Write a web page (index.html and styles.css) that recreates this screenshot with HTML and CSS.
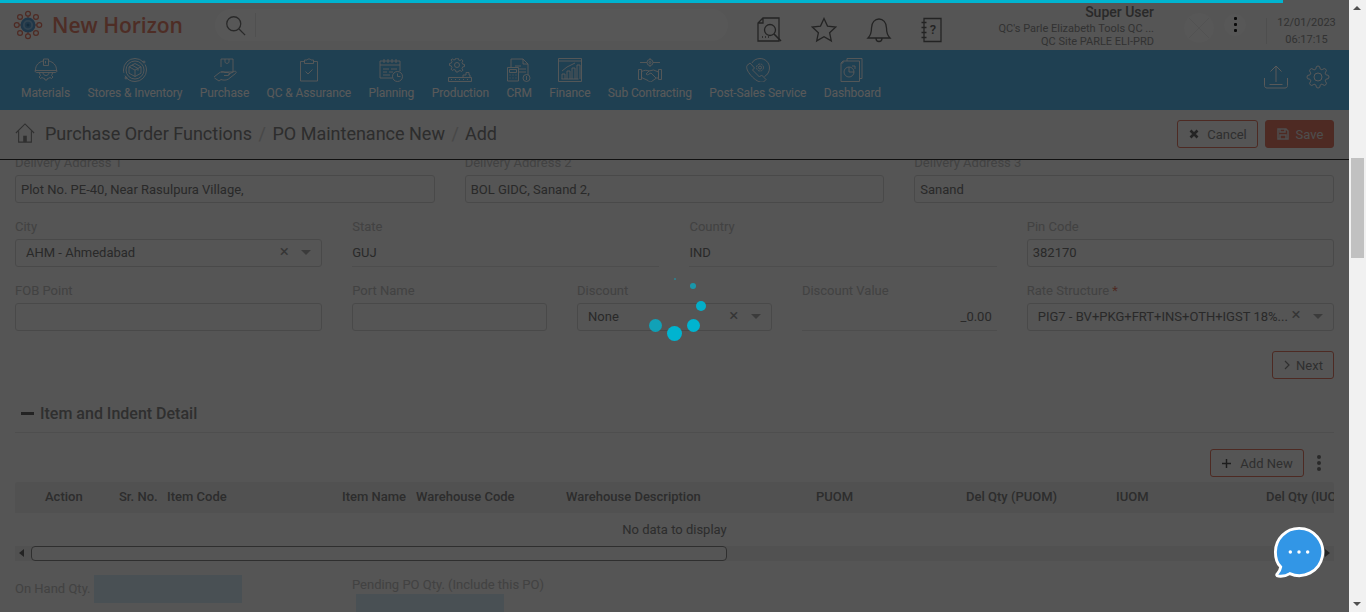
FILE: index.html
```html
<!DOCTYPE html>
<html lang="en">
<head>
<meta charset="utf-8">
<title>PO Maintenance New</title>
<link rel="stylesheet" href="styles.css">
</head>
<body>
<div class="app">
  <div class="main">
    <header class="topbar">
      <div class="brand">
        <svg class="logo" viewBox="0 0 32 32"><g fill="none" stroke="#e07a66" stroke-width="1.300"><circle cx="16" cy="4" r="2.600"/><circle cx="16" cy="28" r="2.600"/><circle cx="4" cy="16" r="2.600"/><circle cx="28" cy="16" r="2.600"/><circle cx="7.500" cy="7.500" r="2.600"/><circle cx="24.500" cy="7.500" r="2.600"/><circle cx="7.500" cy="24.500" r="2.600"/><circle cx="24.500" cy="24.500" r="2.600"/><path d="M6.600 16h2.600M23 16h2.600M16 6.600v2.600M16 23v2.600"/></g><circle cx="16" cy="16" r="8" fill="#5b9fd0"/><circle cx="16" cy="16" r="4.400" fill="none" stroke="#8cc0e4" stroke-width="2"/><circle cx="16" cy="16" r="1.600" fill="#3c7fae"/></svg>
        <span class="brand-name">New Horizon</span>
      </div>
      <div class="search">
        <svg class="search-ic" viewBox="0 0 24 24"><circle cx="10" cy="10" r="8"/><path d="M16 16l7 7"/></svg>
        <span class="search-div"></span>
      </div>
      <div class="tools">
        <svg class="tool" viewBox="0 0 26 26"><path d="M7 1h16v23H2V6zM7 1v5H2"/><circle cx="14" cy="13" r="5.500"/><path d="M18 17l7 7M6 20h1M9 20h1M12 20h1" stroke-width="1.600"/></svg>
        <svg class="tool" viewBox="0 0 26 26"><path d="M13 1.500l3.500 7.600 8.200 1-6.100 5.600 1.700 8.200-7.300-4.100-7.300 4.100 1.700-8.200-6.100-5.600 8.200-1z"/></svg>
        <svg class="tool" viewBox="0 0 26 26"><path d="M2 21c3-3 3.500-6 3.500-10C5.500 5.500 9 2 13 2s7.500 3.500 7.500 9c0 4 .5 7 3.500 10zM10 21.500c0 4 6 4 6 0"/></svg>
        <svg class="tool tool-note" viewBox="2 0 21 26"><path d="M5 1.500h17v23H5zM2.500 5.500h5M2.500 10.500h5M2.500 15.500h5M2.500 20.500h5"/><text x="14" y="17" class="tool-q">?</text></svg>
      </div>
      <div class="user">
        <div class="user-name">Super User</div>
        <div class="user-line">QC's Parle Elizabeth Tools QC ...</div>
        <div class="user-line">QC Site PARLE ELI-PRD</div>
      </div>
      <div class="avatar"><svg viewBox="0 0 30 30"><path d="M5 5l20 20M25 5L5 25"/></svg></div>
      <div class="more"><i></i><i></i><i></i></div>
      <div class="clock"><div>12/01/2023</div><div>06:17:15</div></div>
    </header>

    <nav class="nav">
      <a class="nav-item"><svg viewBox="0 0 24 24"><path d="M1.500 12C1.500 7 5 4 9 3M22.500 12c0-5-3.500-8-7.500-9M9.500 7.500V1h5v6.500zM11.500 3v2.500M1 12.500h22M1 12.500c0 1.500 1 2 2 2h18c1 0 2-.5 2-2M5.500 14.500c0 1 .3 2 1 3l-1.500 1.500 1.500 1.500 1.500-1c.7.5 1.500 1 2.500 1l.5 1.500h2l.5-1.500c1 0 1.800-.5 2.500-1l1.500 1 1.500-1.500-1.500-1.500c.7-1 1-2 1-3M9 14.500c0 4 6 4 6 0"/></svg><span>Materials</span></a>
      <a class="nav-item"><svg viewBox="0 0 24 24"><circle cx="12" cy="12" r="11.500" stroke-dasharray="30 3 30 3"/><circle cx="12" cy="12" r="9"/><path d="M12 5.500l6 3.300v6.400l-6 3.300-6-3.300V8.800zM6 8.800l6 3.300 6-3.300M12 12.100v6.600M9 7.100l6 3.400v2.200"/><circle cx="21" cy="4" r="1" /><circle cx="3" cy="20" r="1"/></svg><span>Stores &amp; Inventory</span></a>
      <a class="nav-item"><svg viewBox="0 0 24 24"><path d="M8 1h12v13H8M8 1v8M12 1v2.500c0 2.500 4 2.500 4 0V1M1 19l5-4c2-1.500 4-1.500 6-.5h3c2 0 2 3 0 3h-4M15 16.500l6-3c2-1 3 1 1.500 2l-7 5.500c-2 1.300-5 1.500-7.500.5l-2 1.500L1.500 20"/></svg><span>Purchase</span></a>
      <a class="nav-item"><svg viewBox="0 0 24 24"><path d="M7.500 3.500H3.500V23h17V3.500h-4M7.500 2H10c.7-1.500 3.300-1.500 4 0h2.500v3.500h-9zM8.500 13.500l2.500 2.500 4.500-4.500"/></svg><span>QC &amp; Assurance</span></a>
      <a class="nav-item"><svg viewBox="0 0 24 24"><path d="M13 20H1V3h20v10M1 7h20M5 1v4M9 1v4M13 1v4M17 1v4M4 11h6M12 11h6M4 14h4M10 14h4M4 17h7"/><circle cx="18.500" cy="18.500" r="5"/><path d="M18.500 15.500v3h3"/></svg><span>Planning</span></a>
      <a class="nav-item"><svg viewBox="0 0 24 24"><circle cx="9" cy="7" r="2.500"/><path d="M8 0h2l.4 1.800 1.700.7 1.500-1 1.400 1.400-1 1.500.7 1.700 1.800.4v2l-1.800.4-.7 1.700 1 1.500-1.400 1.400-1.500-1-1.700.7L10 14H8l-.4-1.800-1.700-.7-1.500 1L3 11.100l1-1.500-.7-1.700L1.500 7.500v-2l1.800-.4.700-1.700-1-1.500L4.400 1l1.500 1 1.700-.7zM.5 19.500h23v4H.5zM15 19.500V17h3v-2.500h3V17h1v2.500M3 21.500h1M7 21.500h1M11 21.500h1M15 21.500h1M19 21.500h1"/></svg><span>Production</span></a>
      <a class="nav-item"><svg viewBox="0 0 24 24"><path d="M4 9V1h12l5 5v11M16 1v5h5M8 8h6M12 11h7M12 14h7M.5 9.500h11V23H.5zM2.500 11.500h7v3h-7zM2.500 17h1M5.500 17h1M8.500 17h1M2.500 20h1M5.500 20h1M8.500 20h1"/><circle cx="19.500" cy="20" r="3.500"/><path d="M19.500 18v4"/></svg><span>CRM</span></a>
      <a class="nav-item"><svg viewBox="0 0 24 24"><path d="M.5.500h23v23H.5zM.5 3h23M3.500 21h17M4 21v-5h3v5M9 21v-8h3v8M14 21v-11h3v11M19 21V7h3v14M4 13l5-4 4-2 4-2"/></svg><span>Finance</span></a>
      <a class="nav-item"><svg viewBox="0 0 24 24"><circle cx="12" cy="4.500" r="3"/><circle cx="12" cy="4.500" r="1"/><path d="M12 0v1.500M12 7.500V9M9 4.500H2M22 4.500h-7M.5 11.500h3v10h-3zM20.500 11.500h3v10h-3zM3.500 13.500c3-1.500 5-1.500 7.500-.5l4.500-1 5 2v6h-2l-5 3.500c-1.500 1-3 0-3.500-1l-6.500-3zM11 13l-3 3c1 1 2 1 3 0l2-1 5 5"/></svg><span>Sub Contracting</span></a>
      <a class="nav-item"><svg viewBox="0 0 24 24"><path d="M6 5C7 2.500 10.500.5 14 .5c5 0 9.500 4 9.500 9.500 0 3.500-2 7-5 8.500"/><circle cx="14" cy="9.500" r="1.500"/><circle cx="14" cy="9.500" r="3.500" stroke-dasharray="2 .8"/><path d="M1 7.500l3-2.500 4.500 5-2 2 7 7 2-2 4.500 4.500-2.500 2.500c-4 1-8.500-2-12.500-6.500C1.500 13.500 0 10 1 7.500z"/></svg><span>Post-Sales Service</span></a>
      <a class="nav-item"><svg viewBox="0 0 24 24"><path d="M19.500 20.500h2.500V.5H7V3M3 3h16.500v20.500H1V5zM3 3v2H1"/><circle cx="9" cy="14" r="5"/><path d="M9 9v5h5M12 8h3v3"/></svg><span>Dashboard</span></a>
      <span class="nav-end">
        <svg viewBox="0 0 24 24"><path d="M.5 13v7.500c0 1.500 1 2.500 2.500 2.500h18c1.500 0 2.500-1 2.500-2.500V13M12 17V1M6.500 6.500L12 1l5.500 5.500M5.500 19.500h13"/></svg>
        <svg viewBox="0 0 24 24"><circle cx="12" cy="12" r="4"/><path d="M19.400 15a1.650 1.650 0 0 0 .33 1.820l.06.06a2 2 0 0 1 0 2.830 2 2 0 0 1-2.830 0l-.06-.06a1.650 1.650 0 0 0-1.820-.33 1.650 1.650 0 0 0-1 1.510V21a2 2 0 0 1-2 2 2 2 0 0 1-2-2v-.09A1.650 1.650 0 0 0 9 19.400a1.650 1.650 0 0 0-1.820.33l-.06.06a2 2 0 0 1-2.830 0 2 2 0 0 1 0-2.830l.06-.06a1.650 1.650 0 0 0 .33-1.820 1.650 1.650 0 0 0-1.510-1H3a2 2 0 0 1-2-2 2 2 0 0 1 2-2h.09A1.650 1.650 0 0 0 4.600 9a1.650 1.650 0 0 0-.33-1.820l-.06-.06a2 2 0 0 1 0-2.830 2 2 0 0 1 2.830 0l.06.06a1.650 1.650 0 0 0 1.820.33H9a1.650 1.650 0 0 0 1-1.510V3a2 2 0 0 1 2-2 2 2 0 0 1 2 2v.09a1.650 1.650 0 0 0 1 1.510 1.650 1.650 0 0 0 1.820-.33l.06-.06a2 2 0 0 1 2.830 0 2 2 0 0 1 0 2.830l-.06.06a1.650 1.650 0 0 0-.33 1.820V9a1.650 1.650 0 0 0 1.510 1H21a2 2 0 0 1 2 2 2 2 0 0 1-2 2h-.09a1.650 1.650 0 0 0-1.510 1z"/></svg>
      </span>
    </nav>

    <div class="crumbs">
      <svg class="home" viewBox="0 0 22 22"><path d="M1 11L11 1l10 10M4 9v12h14V9"/><path class="home-door" d="M9 14h4v7H9z"/></svg>
      <span class="crumb">Purchase Order Functions</span><span class="sep">/</span>
      <span class="crumb">PO Maintenance New</span><span class="sep">/</span>
      <span class="crumb">Add</span>
      <span class="crumb-actions">
        <button class="btn btn-cancel"><svg viewBox="0 0 10 10"><path d="M1.500 1.500l7 7M8.500 1.500l-7 7"/></svg>Cancel</button>
        <button class="btn btn-save"><svg viewBox="0 0 12 12"><path d="M1 1h8l2 2v8H1zM3 1v3h5V1M3 11V7h6v4"/></svg>Save</button>
      </span>
    </div>

    <main class="content">
      <div class="form">
        <label class="field s4"><span class="lab">Delivery Address 1</span><span class="input tight">Plot No. PE-40, Near Rasulpura Village,</span></label>
        <label class="field s4"><span class="lab">Delivery Address 2</span><span class="input tight">BOL GIDC, Sanand 2,</span></label>
        <label class="field s4"><span class="lab">Delivery Address 3</span><span class="input tight">Sanand</span></label>

        <label class="field s3"><span class="lab">City</span><span class="input sel"><span class="val">AHM - Ahmedabad</span><b class="x">×</b><b class="caret"></b></span></label>
        <label class="field s3"><span class="lab">State</span><span class="input plain">GUJ</span></label>
        <label class="field s3"><span class="lab">Country</span><span class="input plain">IND</span></label>
        <label class="field s3"><span class="lab">Pin Code</span><span class="input tight raised">382170</span></label>

        <label class="field s3"><span class="lab">FOB Point</span><span class="input"></span></label>
        <label class="field s2"><span class="lab">Port Name</span><span class="input"></span></label>
        <label class="field s2"><span class="lab">Discount</span><span class="input sel"><span class="val">None</span><b class="x">×</b><b class="caret"></b></span></label>
        <label class="field s2"><span class="lab">Discount Value</span><span class="input plain right">_0.00</span></label>
        <label class="field s3"><span class="lab">Rate Structure <em>*</em></span><span class="input sel"><span class="val">PIG7 - BV+PKG+FRT+INS+OTH+IGST 18%...</span><b class="x x-high">×</b><b class="caret"></b></span></label>
      </div>

      <div class="next-row"><button class="btn btn-line btn-next"><svg viewBox="0 0 6 10"><path d="M1 1l4 4-4 4"/></svg>Next</button></div>

      <h2 class="section"><i class="minus"></i>Item and Indent Detail</h2>

      <div class="table-tools">
        <button class="btn btn-line btn-add"><svg viewBox="0 0 10 10"><path d="M5 0v10M0 5h10"/></svg>Add New</button>
        <span class="dots"><i></i><i></i><i></i></span>
      </div>

      <div class="grid">
        <div class="thead">
          <span class="c-action">Action</span><span class="c-sr">Sr. No.</span><span class="c-code">Item Code</span><span class="c-name">Item Name</span><span class="c-wh">Warehouse Code</span><span class="c-wd">Warehouse Description</span><span class="c-q">PUOM</span><span class="c-q">Del Qty (PUOM)</span><span class="c-q">IUOM</span><span class="c-q">Del Qty (IUOM)</span>
        </div>
        <div class="empty">No data to display</div>
        <div class="hscroll"><i class="arrow-l"></i><span class="hthumb"></span><i class="arrow-r"></i></div>
      </div>

      <div class="qty">
        <div class="qty-a"><span class="lab">On Hand Qty.</span><span class="box"></span></div>
        <div class="qty-b"><span class="lab">Pending PO Qty. (Include this PO)</span><span class="box"></span></div>
      </div>
    </main>

    <div class="overlay"></div>
    <div class="progress"></div>
    <div class="spinner"><i class="d1"></i><i class="d2"></i><i class="d3"></i><i class="d4"></i><i class="d5"></i><i class="d6"></i></div>
    <svg class="chat" viewBox="0 0 54 54"><path d="M27 2.500a24.500 24.500 0 1 1-9.500 47c-3 2-7 3-12 2.500-2 0-2-1.500-1-2.500 2-2 3-4 3.500-7C3 38 2.500 33 2.500 27A24.500 24.500 0 0 1 27 2.500z" fill="#3296e6" stroke="#fff" stroke-width="3"/><circle cx="18" cy="27" r="1.800" fill="#fff"/><circle cx="27" cy="27" r="1.800" fill="#fff"/><circle cx="36" cy="27" r="1.800" fill="#fff"/></svg>
  </div>
  <aside class="vscroll"><i class="arrow-u"></i><span class="vthumb"></span><i class="arrow-d"></i></aside>
</div>
</body>
</html>
```
FILE: styles.css
```css
* { box-sizing: border-box; }
html, body { margin: 0; height: 100%; overflow: hidden; }
body { font-family: Roboto, "Liberation Sans", sans-serif; color: #777; background: #f2f2f2; }
.app { display: flex; height: 612px; width: 1366px; overflow: hidden; }
.main { position: relative; width: 1349px; height: 612px; display: flex; flex-direction: column; background: #f2f2f2; overflow: hidden; }

/* top bar */
.topbar { height: 50px; flex: none; display: flex; align-items: center; padding-top: 1px; }
.brand { display: flex; align-items: center; width: 215px; padding-left: 13px; margin-top: -1px; }
.logo { width: 30px; height: 30px; flex: none; }
.brand-name { margin-left: 9px; font: 600 21px "Open Sans", sans-serif; color: #e0806c; }
.search { width: 513px; height: 32px; border-radius: 16px; background: #fafafa; display: flex; align-items: center; padding-left: 10px; margin-top: -1px; }
.search-ic { width: 21px; height: 21px; fill: none; stroke: #777; stroke-width: 1.500; }
.search-div { width: 1px; height: 24px; background: #e6e6e6; margin-left: 9px; }
.tools { display: flex; gap: 29px; margin-left: 28px; width: 215px; margin-top: 9px; }
.tool { width: 26px; height: 26px; fill: none; stroke: #666; stroke-width: 1.300; flex: none; }
.tool-note { width: 21px; }
.tool-q { font: 500 13px Roboto, sans-serif; stroke: none; fill: #666; text-anchor: middle; }
.user { width: 203px; margin-left: -20px; margin-top: -1px; text-align: right; line-height: 13px; font-size: 11px; color: #909090; }
.user-name { font-size: 14px; font-weight: 500; line-height: 20px; color: #777; }
.avatar { width: 30px; height: 30px; border-radius: 50%; background: #f8f8f8; margin-left: 30px; flex: none; margin-top: 5px; }
.avatar svg { display: block; fill: none; stroke: #e4e4e4; stroke-width: .7; }
.more { width: 22px; height: 22px; border-radius: 50%; background: #f8f8f8; margin-left: 10px; margin-top: -2px; display: flex; flex-direction: column; align-items: center; justify-content: center; gap: 3px; flex: none; }
.more i { width: 3px; height: 3px; background: #222; border-radius: 1px; }
.clock { margin-left: 20px; border-left: 1px solid #e0e0e0; padding-left: 10px; width: 70px; height: 26px; font-size: 11px; line-height: 17px; color: #909090; text-align: center; white-space: nowrap; flex: none; margin-top: 10px; display: flex; flex-direction: column; justify-content: center; }

/* module nav */
.nav { height: 60px; flex: none; background: #5bb7ea; display: flex; gap: 17.400px; padding-left: 21px; color: #fff; position: relative; }
.nav-item { display: flex; flex-direction: column; align-items: center; font-size: 12px; letter-spacing: -.1px; padding-top: 8px; white-space: nowrap; }
.nav-item svg { width: 24px; height: 24px; fill: none; stroke: #fff; stroke-width: .9; }
.nav-item span { margin-top: 3px; line-height: 16px; }
.nav-end { margin-left: auto; display: flex; gap: 18px; padding: 15px 19px 0 0; height: 100%; }
.nav-end svg { width: 24px; height: 24px; fill: none; stroke: #fff; stroke-width: 1; }

/* breadcrumb */
.crumbs { height: 50px; flex: none; display: flex; align-items: center; padding: 0 15px 3px; border-bottom: 1px solid #333; background: #f2f2f2; font-size: 18px; color: #808080; position: relative; z-index: 1; }
.home { width: 20px; height: 20px; fill: none; stroke: #888; stroke-width: 1.200; margin-right: 10px; }
.home-door { fill: #888; stroke: none; }
.sep { color: #ccc; margin: 0 6.500px; }
.sep + .crumb + .sep { margin-right: 6px; }
.crumb-actions { margin-left: auto; display: flex; gap: 7px; margin-top: 2px; }
.btn { height: 28px; display: inline-flex; align-items: center; justify-content: center; border-radius: 3px; font: 13px Roboto, sans-serif; border: 1px solid #dc7a66; background: #f2f2f2; color: #888; padding: 0; }
.btn svg { fill: none; stroke: currentColor; }
.btn-cancel { width: 81px; padding-left: 1px; }
.btn-cancel svg { width: 10px; height: 10px; stroke-width: 2.600; margin-right: 8px; stroke: #666; }
.btn-save { width: 69px; padding-left: 1px; background: #e07a66; color: #ddd; }
.btn-save svg { width: 12px; height: 12px; stroke-width: 1.500; margin-right: 7px; }

/* form */
.content { flex: 1; overflow: hidden; padding: 0 15px; }
.form { display: grid; grid-template-columns: repeat(12, 1fr); column-gap: 30px; row-gap: 16px; margin-top: -5px; }
.s2 { grid-column: span 2; } .s3 { grid-column: span 3; } .s4 { grid-column: span 4; }
.field { display: block; min-width: 0; }
.lab { display: block; font-size: 13px; line-height: 16px; color: #bcbcbc; margin-bottom: 4px; white-space: nowrap; }
.lab em { color: #e07a66; font-style: normal; }
.input { display: flex; align-items: center; height: 28px; border: 1px solid #d2d2d2; border-radius: 3px; font-size: 13px; color: #777; padding: 0 10px; }
.tight { padding: 0 5px; }
.raised { padding-bottom: 1px; }
.plain { border: 0; border-bottom: 1px solid #dcdcdc; border-radius: 0; padding: 0; }
.right { justify-content: flex-end; padding-right: 5px; }
.sel { padding-bottom: 1px; }
.sel .val { flex: 1; min-width: 0; white-space: nowrap; }
.sel .x { font-weight: 400; font-size: 17px; line-height: 1; color: #999; margin: -2px 0 0 6px; width: 10px; text-align: center; flex: none; }
.sel .x-high { margin-top: -4px; }
.caret { width: 0; height: 0; flex: none; border: 5px solid transparent; border-top-color: #aaa; border-bottom: 0; margin-left: 12px; }

.next-row { display: flex; justify-content: flex-end; margin-top: 20px; }
.btn-next { width: 62px; padding-left: 1px; }
.btn-next svg { width: 6px; height: 10px; stroke-width: 1.200; margin-right: 6px; }
.section { display: flex; align-items: center; height: 54px; margin: 0; font-size: 16px; font-weight: 500; color: #888; border-bottom: 1px solid #dedede; padding: 15px 0 0 6px; }
.minus { width: 13px; height: 3px; background: #666; margin-right: 6px; }
.table-tools { display: flex; justify-content: flex-end; align-items: center; margin-top: 16px; }
.btn-add { width: 94px; padding-left: 1px; }
.btn-add svg { width: 9px; height: 9px; stroke-width: 1.600; margin-right: 9px; stroke: #555; }
.dots { width: 30px; display: flex; flex-direction: column; align-items: center; gap: 2px; }
.dots i { width: 4px; height: 4px; background: #777; border-radius: 50%; }

.grid { margin-top: 5px; }
.thead { display: flex; height: 31px; padding-bottom: 2px; align-items: center; background: #e8e8e8; font-size: 13px; font-weight: 500; color: #808080; white-space: nowrap; overflow: hidden; border-radius: 3px 3px 0 0; }
.thead span { flex: none; }
.c-action { width: 104px; padding-left: 30px; }
.c-sr { width: 48px; }
.c-code { width: 175px; }
.c-name { width: 74px; }
.c-wh { width: 150px; }
.c-wd { width: 250px; }
.c-q { width: 150px; }
.empty { height: 33px; display: flex; align-items: center; justify-content: center; font-size: 13px; color: #808080; }
.hscroll { height: 15px; background: #e8e8e8; display: flex; align-items: center; position: relative; padding-left: 16px; }
.hthumb { width: 696px; height: 15px; background: #f2f2f2; border: 1px solid #888; border-radius: 4px; }
.arrow-l { position: absolute; left: 4px; top: 3px; border: 4px solid transparent; border-right: 5px solid #666; border-left: 0; }
.arrow-r { position: absolute; right: 4px; top: 3px; border: 4px solid transparent; border-left: 5px solid #666; border-right: 0; }

.qty { display: flex; margin-top: 14px; }
.qty-a { display: flex; align-items: center; width: 337px; height: 28px; }
.qty-a .lab { margin: 0 3px 0 0; }
.box { display: block; width: 148px; height: 28px; background: #d2e6f0; }
.qty-b { margin-top: 2px; }
.qty-b .lab { margin-bottom: 1px; }
.qty-b .box { margin-left: 4px; }

/* loading layer */
.overlay { position: absolute; inset: 0; background: rgba(0, 0, 0, .65); z-index: 2; }
.progress { position: absolute; top: 0; left: 0; width: 1283px; height: 3px; background: #00b4d0; z-index: 3; }
.spinner { position: absolute; left: 0; top: 0; z-index: 3; }
.spinner i { position: absolute; border-radius: 50%; background: #00b4d0; }
.d1 { left: 667px; top: 326px; width: 15px; height: 15px; }
.d2 { left: 687px; top: 319px; width: 13px; height: 13px; }
.d3 { left: 696px; top: 301px; width: 10px; height: 10px; opacity: .95; }
.d4 { left: 690px; top: 283px; width: 6px; height: 6px; opacity: .7; }
.d5 { left: 674px; top: 278px; width: 2px; height: 2px; opacity: .5; }
.d6 { left: 649px; top: 319px; width: 13px; height: 13px; opacity: .8; }
.chat { position: absolute; left: 1273px; top: 526px; width: 52px; height: 52px; z-index: 3; }

/* page scrollbar */
.vscroll { width: 17px; height: 612px; background: #f1f1f1; position: relative; padding-top: 158px; }
.vthumb { display: block; width: 13px; height: 100px; margin-left: 2px; background: #c1c1c1; }
.arrow-u { position: absolute; left: 4px; top: 6px; border: 4px solid transparent; border-bottom: 4px solid #505050; border-top: 0; }
.arrow-d { position: absolute; left: 4px; bottom: 6px; border: 4px solid transparent; border-top: 4px solid #505050; border-bottom: 0; }
```
